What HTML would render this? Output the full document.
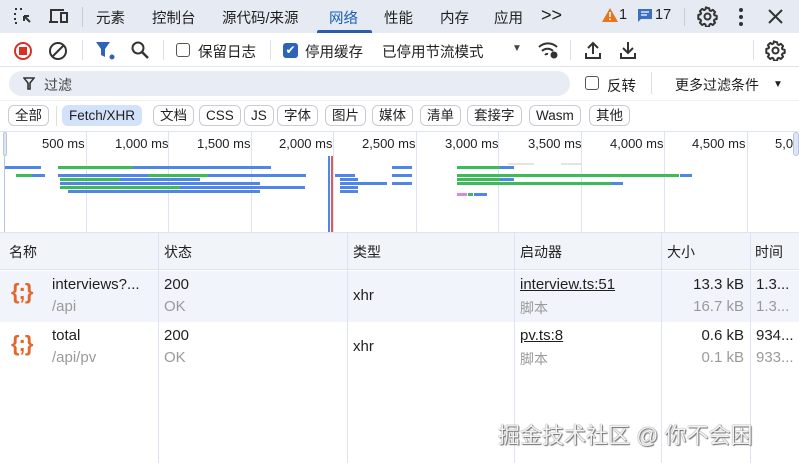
<!DOCTYPE html>
<html><head><meta charset="utf-8"><style>
*{margin:0;padding:0;box-sizing:border-box}
body{width:799px;height:463px;overflow:hidden;background:#fff;font-family:"Liberation Sans","Noto Sans CJK SC",sans-serif;color:#1f1f1f;position:relative;font-size:14px}
.a{position:absolute;white-space:nowrap}
.top{position:absolute;left:0;top:0;width:799px;height:33px;background:#e6ebf3}
.tb{position:absolute;left:0;top:33px;width:799px;height:34px;background:#fff;border-bottom:1px solid #dfe3ea}
.chip{position:absolute;top:105px;height:21px;border:1px solid #c9ccd2;border-radius:6px;font-size:13.5px;line-height:19px;padding:0 6px;background:#fff}
.gl{position:absolute;top:131px;width:1px;height:101px;background:#dde3f0}
.vl{position:absolute;top:232px;width:1px;height:231px;background:#dde3f0}
.bar{position:absolute;height:3px}
.g{background:#3dba5a}.b{background:#4f86e8}
.grey{color:#9a9a9a}
</style></head><body>
<svg width="0" height="0" style="position:absolute"><defs><g id="gear"><path d="M10 1.5l1.6.2.5 2.2 1.3.6 1.9-1.2 2.3 2.3-1.2 1.9.6 1.3 2.2.5v3.2l-2.2.5-.6 1.3 1.2 1.9-2.3 2.3-1.9-1.2-1.3.6-.5 2.2H8.4l-.5-2.2-1.3-.6-1.9 1.2-2.3-2.3 1.2-1.9-.6-1.3-2.2-.5V8.4l2.2-.5.6-1.3-1.2-1.9 2.3-2.3 1.9 1.2 1.3-.6.5-2.2z" fill="none" stroke="#333" stroke-width="2" stroke-linejoin="round"/><circle cx="10" cy="10" r="3" fill="none" stroke="#333" stroke-width="2"/></g></defs></svg>
<div class="top"></div>
<div class="a" style="left:0;top:33px;width:799px;height:1px;background:#d5dbe5"></div>
<svg class="a" style="left:13px;top:7px" width="20" height="20" viewBox="0 0 20 20" fill="none" stroke="#333" stroke-width="2"><path d="M2 2h2M7 2h2M2 6v2M2 11v2M2 16h2M11 9l6 6M11 9h5M11 9v5"/></svg>
<svg class="a" style="left:48px;top:8px" width="22" height="17" viewBox="0 0 22 17" fill="none" stroke="#333" stroke-width="2"><path d="M3 13V2h13M1 14h9M13 5h6v9h-6z"/></svg>
<div class="a" style="left:82px;top:7px;width:1px;height:20px;background:#c8ccd3"></div>
<div class="a" style="left:96px;top:7px;font-size:14.5px">元素</div>
<div class="a" style="left:152px;top:7px;font-size:14.5px">控制台</div>
<div class="a" style="left:222px;top:7px;font-size:14.5px">源代码/来源</div>
<div class="a" style="left:329px;top:7px;font-size:14.5px;color:#1a5fb4">网络</div>
<div class="a" style="left:317px;top:30px;width:55px;height:3px;background:#2a5ea8;border-radius:2px 2px 0 0"></div>
<div class="a" style="left:384px;top:7px;font-size:14.5px">性能</div>
<div class="a" style="left:440px;top:7px;font-size:14.5px">内存</div>
<div class="a" style="left:494px;top:7px;font-size:14.5px">应用</div>
<div class="a" style="left:541px;top:5px;font-size:18px">&gt;&gt;</div>
<svg class="a" style="left:602px;top:8px" width="16" height="14" viewBox="0 0 16 14"><path d="M8 0L16 14H0z" fill="#e8741e"/><rect x="7.2" y="4" width="1.6" height="5" fill="#fff"/><rect x="7.2" y="10.5" width="1.6" height="1.6" fill="#fff"/></svg>
<div class="a" style="left:619px;top:7px;font-size:14.5px">1</div>
<svg class="a" style="left:638px;top:9px" width="14" height="14" viewBox="0 0 14 14"><path d="M0 0h14v10H3l-3 3z" fill="#3b6fc4"/><path d="M3 3h8M3 6h6" stroke="#fff" stroke-width="1.2"/></svg>
<div class="a" style="left:655px;top:7px;font-size:14.5px">17</div>
<div class="a" style="left:684px;top:8px;width:1px;height:18px;background:#c8ccd3"></div>
<svg class="a" style="left:697px;top:6px" width="21" height="21" viewBox="-0.5 -0.5 21 21"><use href="#gear"/></svg>
<svg class="a" style="left:738px;top:7px" width="6" height="20"><circle cx="3" cy="3" r="2" fill="#333"/><circle cx="3" cy="10" r="2" fill="#333"/><circle cx="3" cy="17" r="2" fill="#333"/></svg>
<svg class="a" style="left:768px;top:9px" width="15" height="15" stroke="#333" stroke-width="2"><path d="M1 1l13 13M14 1L1 14"/></svg>
<div class="tb"></div>
<svg class="a" style="left:13px;top:41px" width="20" height="20"><circle cx="10" cy="10" r="8" fill="none" stroke="#d93025" stroke-width="2"/><rect x="6" y="6" width="8" height="8" fill="#d93025"/></svg>
<svg class="a" style="left:48px;top:41px" width="20" height="20"><circle cx="10" cy="10" r="8" fill="none" stroke="#333" stroke-width="2"/><path d="M4.5 15.5l11-11" stroke="#333" stroke-width="2"/></svg>
<div class="a" style="left:82px;top:40px;width:1px;height:20px;background:#dcdfe4"></div>
<svg class="a" style="left:96px;top:42px" width="20" height="18"><path d="M0 0h14l-5 7v8l-4-2V7z" fill="#2f63b8"/><circle cx="16" cy="15" r="2.5" fill="#2f63b8"/></svg>
<svg class="a" style="left:130px;top:40px" width="20" height="20"><circle cx="8" cy="8" r="5.5" fill="none" stroke="#333" stroke-width="2"/><path d="M12 12l6 6" stroke="#333" stroke-width="2.4"/></svg>
<div class="a" style="left:163px;top:40px;width:1px;height:20px;background:#dcdfe4"></div>
<div class="a" style="left:176px;top:43px;width:14px;height:14px;border:1.5px solid #555;border-radius:3px"></div>
<div class="a" style="left:198px;top:41px;font-size:14.5px">保留日志</div>
<div class="a" style="left:270px;top:40px;width:1px;height:20px;background:#dcdfe4"></div>
<div class="a" style="left:283px;top:43px;width:15px;height:15px;background:#2f63b8;border-radius:3px;color:#fff;font-size:12px;line-height:15px;text-align:center">✔</div>
<div class="a" style="left:305px;top:41px;font-size:14.5px">停用缓存</div>
<div class="a" style="left:382px;top:41px;font-size:14.5px">已停用节流模式</div>
<div class="a" style="left:512px;top:43px;font-size:10px;color:#444">▼</div>
<svg class="a" style="left:537px;top:40px" width="24" height="20" fill="none" stroke="#333" stroke-width="2"><path d="M2 7a13 13 0 0 1 18 0M5 11a8 8 0 0 1 11 0M8 15a3 3 0 0 1 3-1"/><circle cx="17" cy="15" r="2.5" fill="#333"/></svg>
<div class="a" style="left:570px;top:40px;width:1px;height:20px;background:#dcdfe4"></div>
<svg class="a" style="left:584px;top:40px" width="18" height="20" fill="none" stroke="#333" stroke-width="2"><path d="M9 14V3M4 8l5-5 5 5M2 13v5h14v-5"/></svg>
<svg class="a" style="left:619px;top:40px" width="18" height="20" fill="none" stroke="#333" stroke-width="2"><path d="M9 2v11M4 8l5 5 5-5M2 13v5h14v-5"/></svg>
<div class="a" style="left:753px;top:40px;width:1px;height:20px;background:#dcdfe4"></div>
<svg class="a" style="left:765px;top:40px" width="21" height="21" viewBox="-0.5 -0.5 21 21"><use href="#gear"/></svg>
<div class="a" style="left:9px;top:71px;width:561px;height:25px;background:#e8edf5;border-radius:13px"></div>
<svg class="a" style="left:23px;top:77px" width="12" height="13" fill="none" stroke="#333" stroke-width="1.6"><path d="M1 1h10L7 6v6H5V6z"/></svg>
<div class="a" style="left:44px;top:75px;font-size:14px;color:#444">过滤</div>
<div class="a" style="left:585px;top:76px;width:14px;height:14px;border:1.5px solid #555;border-radius:3px"></div>
<div class="a" style="left:607px;top:75px;font-size:14.5px">反转</div>
<div class="a" style="left:651px;top:72px;width:1px;height:22px;background:#dcdfe4"></div>
<div class="a" style="left:675px;top:75px;font-size:14px">更多过滤条件</div>
<div class="a" style="left:773px;top:79px;font-size:10px">▼</div>
<div class="a" style="left:0;top:100px;width:799px;height:1px;background:#eef0f4"></div>
<div class="chip" style="left:8px">全部</div>
<div class="a" style="left:56px;top:106px;width:1px;height:20px;background:#dcdfe4"></div>
<div class="chip" style="left:62px;border-color:#d3e2fb;background:#d3e2fb">Fetch/XHR</div>
<div class="chip" style="left:153px">文档</div>
<div class="chip" style="left:199px">CSS</div>
<div class="chip" style="left:244px">JS</div>
<div class="chip" style="left:277px">字体</div>
<div class="chip" style="left:325px">图片</div>
<div class="chip" style="left:372px">媒体</div>
<div class="chip" style="left:420px">清单</div>
<div class="chip" style="left:467px">套接字</div>
<div class="chip" style="left:529px">Wasm</div>
<div class="chip" style="left:589px">其他</div>
<div class="a" style="left:0;top:131px;width:799px;height:1px;background:#dde3f0"></div>
<div class="a" style="left:3px;top:132px;width:4px;height:24px;background:#dfe6f3;border:1px solid #b8c6e0;border-radius:3px"></div>
<div class="a" style="left:793px;top:132px;width:6px;height:24px;background:#dfe6f3;border:1px solid #b8c6e0;border-radius:3px"></div>
<div class="a" style="left:4px;top:156px;width:1px;height:76px;background:#b8c6e0"></div>
<div class="gl" style="left:86px"></div><div class="gl" style="left:168px"></div><div class="gl" style="left:251px"></div><div class="gl" style="left:333px"></div><div class="gl" style="left:416px"></div><div class="gl" style="left:498px"></div><div class="gl" style="left:581px"></div><div class="gl" style="left:664px"></div><div class="gl" style="left:747px"></div>
<div class="a" style="left:42px;top:136px;font-size:13px">500 ms</div>
<div class="a" style="left:115px;top:136px;font-size:13px">1,000 ms</div>
<div class="a" style="left:197px;top:136px;font-size:13px">1,500 ms</div>
<div class="a" style="left:279px;top:136px;font-size:13px">2,000 ms</div>
<div class="a" style="left:362px;top:136px;font-size:13px">2,500 ms</div>
<div class="a" style="left:445px;top:136px;font-size:13px">3,000 ms</div>
<div class="a" style="left:528px;top:136px;font-size:13px">3,500 ms</div>
<div class="a" style="left:610px;top:136px;font-size:13px">4,000 ms</div>
<div class="a" style="left:692px;top:136px;font-size:13px">4,500 ms</div>
<div class="a" style="left:775px;top:136px;font-size:13px">5,0</div>
<div class="bar b" style="left:5px;top:166px;width:36px"></div>
<div class="bar g" style="left:58px;top:166px;width:75px"></div><div class="bar b" style="left:133px;top:166px;width:138px"></div>
<div class="bar g" style="left:16px;top:174px;width:16px"></div><div class="bar b" style="left:32px;top:174px;width:13px"></div>
<div class="bar b" style="left:58px;top:174px;width:90px"></div><div class="bar g" style="left:148px;top:174px;width:60px"></div><div class="bar b" style="left:208px;top:174px;width:98px"></div>
<div class="bar g" style="left:60px;top:178px;width:60px"></div><div class="bar b" style="left:120px;top:178px;width:80px"></div>
<div class="bar b" style="left:60px;top:182px;width:200px"></div>
<div class="bar g" style="left:60px;top:186px;width:120px"></div><div class="bar b" style="left:180px;top:186px;width:125px"></div>
<div class="bar b" style="left:68px;top:190px;width:192px"></div>
<div class="a" style="left:328px;top:156px;width:2px;height:76px;background:#4f86e8"></div>
<div class="a" style="left:331px;top:156px;width:2px;height:76px;background:#e05a5a"></div>
<div class="bar b" style="left:335px;top:174px;width:20px"></div>
<div class="bar b" style="left:340px;top:182px;width:47px"></div>
<div class="bar b" style="left:340px;top:186px;width:18px"></div>
<div class="bar b" style="left:340px;top:178px;width:18px"></div>
<div class="bar b" style="left:340px;top:190px;width:18px"></div>
<div class="bar b" style="left:392px;top:166px;width:20px"></div>
<div class="bar b" style="left:392px;top:174px;width:20px"></div>
<div class="bar b" style="left:392px;top:182px;width:20px"></div>
<div class="bar g" style="left:457px;top:166px;width:43px"></div><div class="bar b" style="left:500px;top:166px;width:14px"></div>
<div class="bar g" style="left:457px;top:174px;width:222px"></div><div class="bar b" style="left:680px;top:174px;width:12px"></div>
<div class="bar g" style="left:457px;top:178px;width:43px"></div><div class="bar b" style="left:500px;top:178px;width:14px"></div>
<div class="bar g" style="left:457px;top:182px;width:154px"></div><div class="bar b" style="left:611px;top:182px;width:12px"></div>
<div class="bar" style="left:457px;top:193px;width:10px;background:#d68be0"></div><div class="bar g" style="left:468px;top:193px;width:5px"></div><div class="bar b" style="left:474px;top:193px;width:13px"></div>
<div class="bar" style="left:508px;top:163px;width:26px;height:2px;background:#e4e4e4"></div>
<div class="bar" style="left:561px;top:163px;width:20px;height:2px;background:#e4e4e4"></div>
<div class="a" style="left:0;top:232px;width:799px;height:38px;background:#f1f4f9;border-top:1px solid #dde3f0;border-bottom:1px solid #dde3f0"></div>
<div class="a" style="left:0;top:271px;width:799px;height:51px;background:#f1f4fa"></div>
<div class="vl" style="left:158px"></div><div class="vl" style="left:347px"></div><div class="vl" style="left:514px"></div><div class="vl" style="left:661px"></div><div class="vl" style="left:750px"></div>
<div class="a" style="left:9px;top:242px;font-size:14px">名称</div>
<div class="a" style="left:164px;top:242px;font-size:14px">状态</div>
<div class="a" style="left:353px;top:242px;font-size:14px">类型</div>
<div class="a" style="left:520px;top:242px;font-size:14px">启动器</div>
<div class="a" style="left:667px;top:242px;font-size:14px">大小</div>
<div class="a" style="left:755px;top:242px;font-size:14px">时间</div>
<div class="a" style="left:11px;top:279px;font-size:22px;font-weight:bold;color:#e2672a;letter-spacing:-1px">{;}</div>
<div class="a" style="left:52px;top:276px;font-size:15px">interviews?...</div>
<div class="a grey" style="left:52px;top:298px;font-size:15px">/api</div>
<div class="a" style="left:164px;top:276px;font-size:15px">200</div>
<div class="a grey" style="left:164px;top:298px;font-size:15px">OK</div>
<div class="a" style="left:353px;top:287px;font-size:15px">xhr</div>
<div class="a" style="left:520px;top:276px;font-size:15px;text-decoration:underline">interview.ts:51</div>
<div class="a grey" style="left:520px;top:298px;font-size:14px">脚本</div>
<div class="a" style="left:661px;width:83px;text-align:right;top:276px;font-size:15px">13.3 kB</div>
<div class="a grey" style="left:661px;width:83px;text-align:right;top:298px;font-size:15px">16.7 kB</div>
<div class="a" style="left:756px;top:276px;font-size:15px">1.3...</div>
<div class="a grey" style="left:756px;top:298px;font-size:15px">1.3...</div>
<div class="a" style="left:11px;top:331px;font-size:22px;font-weight:bold;color:#e2672a;letter-spacing:-1px">{;}</div>
<div class="a" style="left:52px;top:327px;font-size:15px">total</div>
<div class="a grey" style="left:52px;top:349px;font-size:15px">/api/pv</div>
<div class="a" style="left:164px;top:327px;font-size:15px">200</div>
<div class="a grey" style="left:164px;top:349px;font-size:15px">OK</div>
<div class="a" style="left:353px;top:338px;font-size:15px">xhr</div>
<div class="a" style="left:520px;top:327px;font-size:15px;text-decoration:underline">pv.ts:8</div>
<div class="a grey" style="left:520px;top:349px;font-size:14px">脚本</div>
<div class="a" style="left:661px;width:83px;text-align:right;top:327px;font-size:15px">0.6 kB</div>
<div class="a grey" style="left:661px;width:83px;text-align:right;top:349px;font-size:15px">0.1 kB</div>
<div class="a" style="left:756px;top:327px;font-size:15px">934...</div>
<div class="a grey" style="left:756px;top:349px;font-size:15px">933...</div>
<div class="a" style="left:498px;top:418px;font-size:22px;color:#f2f2f2;text-shadow:0 0 1px #444,1px 1px 1px #777">掘金技术社区 @ 你不会困</div>
</body></html>
